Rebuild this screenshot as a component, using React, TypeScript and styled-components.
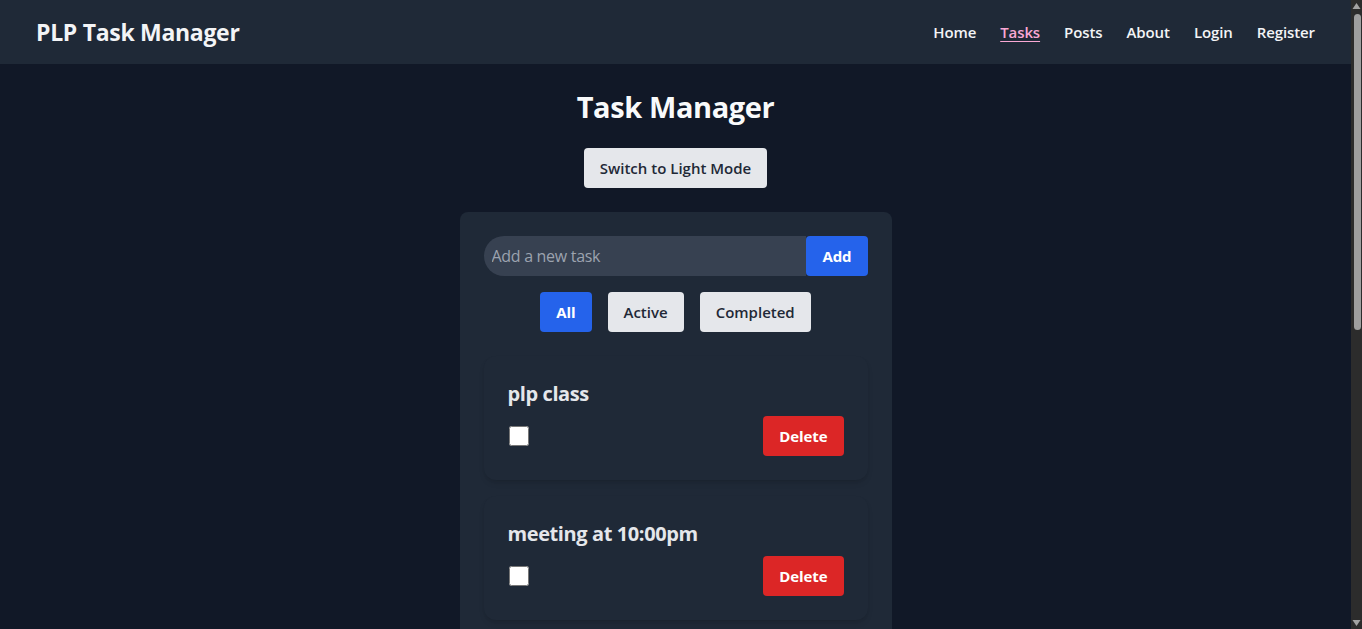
import React, { useState } from 'react';
import styled, { createGlobalStyle } from 'styled-components';

type Filter = 'all' | 'active' | 'completed';
type Variant = 'blue' | 'gray' | 'red';

type Task = {
    id: number
    text: string
    done: boolean
}

const GlobalStyle = createGlobalStyle`
    html {
        color-scheme: dark;
    }
    body {
        margin: 0;
        background-color: #111827;
        font-family: "Open Sans", "Noto Sans", sans-serif;
        color: #f3f4f6;
    }
    * {
        box-sizing: border-box;
    }
`

const Shell = styled.div`
    display: flex;
    height: 100vh;
    overflow: hidden;
    background-color: #111827;
`

const Page = styled.div`
    flex: 1;
    min-width: 0;
    overflow: hidden;
`

// window scrollbar, as the browser draws it in dark mode
const ScrollBar = styled.aside`
    width: 11px;
    flex-shrink: 0;
    display: flex;
    flex-direction: column;
    align-items: center;
    background-color: #2c2c2c;
`

const Arrow = styled.svg`
    display: block;
    width: 11px;
    height: 13px;
    flex-shrink: 0;
`

const Thumb = styled.div`
    width: 7px;
    height: 316px;
    margin: 1px 0 0 1px;
    border-radius: 4px;
    background-color: #9f9f9f;
`

const Spacer = styled.div`
    flex: 1;
`

const Header = styled.header`
    height: 64px;
    background-color: #1f2937;
    display: flex;
    align-items: center;
    justify-content: space-between;
    padding: 0 36px;
`

const Brand = styled.div`
    font-size: 23px;
    font-weight: 700;
    color: #f3f4f6;
    letter-spacing: -0.3px;
`

const Nav = styled.nav`
    display: flex;
    gap: 24px;
`

const NavLink = styled.a<{ $active?: boolean }>`
    font-size: 15px;
    font-weight: 600;
    letter-spacing: -0.1px;
    color: ${(props) => (props.$active ? '#f9a8d4' : '#f3f4f6')};
    text-decoration: ${(props) => (props.$active ? 'underline' : 'none')};
    text-underline-offset: 3px;
    cursor: pointer;
`

const Main = styled.main`
    display: flex;
    flex-direction: column;
    align-items: center;
    padding-top: 24px;
`

const Title = styled.h1`
    margin: 0 0 22px;
    font-size: 29px;
    line-height: 38px;
    font-weight: 700;
    letter-spacing: -0.4px;
    color: #f9fafb;
`

const ModeButton = styled.button`
    height: 40px;
    padding: 0 16px;
    border: none;
    border-radius: 4px;
    background-color: #e5e7eb;
    color: #1f2937;
    font-family: inherit;
    font-size: 15px;
    font-weight: 600;
    margin-bottom: 24px;
`

const Card = styled.section`
    width: 432px;
    background-color: #1f2937;
    border-radius: 8px;
    padding: 24px;
`

const AddRow = styled.form`
    display: flex;
    margin-bottom: 16px;
`

const Input = styled.input`
    flex: 1;
    height: 40px;
    border: none;
    outline: none;
    border-radius: 20px 0 0 20px;
    background-color: #374151;
    color: #f3f4f6;
    padding: 0 8px;
    font-family: inherit;
    font-size: 16px;
    letter-spacing: -0.3px;

    &::placeholder {
        color: #9ca3af;
    }
`

const Button = styled.button<{ $variant: Variant }>`
    height: 40px;
    padding: 0 16px;
    border: none;
    border-radius: 4px;
    font-family: inherit;
    font-size: 15px;
    font-weight: ${(props) => (props.$variant === 'gray' ? 600 : 700)};
    letter-spacing: ${(props) => (props.$variant === 'gray' ? '0' : '-0.1px')};
    cursor: pointer;
    background-color: ${(props) =>
        props.$variant === 'blue' ? '#2563eb' : props.$variant === 'red' ? '#dc2626' : '#e5e7eb'};
    color: ${(props) => (props.$variant === 'gray' ? '#1f2937' : '#ffffff')};
`

const Filters = styled.div`
    display: flex;
    justify-content: center;
    gap: 16px;
    margin-bottom: 24px;
`

const TaskList = styled.ul`
    list-style: none;
    margin: 0;
    padding: 0;
    display: flex;
    flex-direction: column;
    gap: 16px;
`

const TaskItem = styled.li`
    background-color: #1f2937;
    border-radius: 12px;
    padding: 24px;
    box-shadow: 0 4px 6px -1px rgba(0, 0, 0, 0.1), 0 2px 4px -2px rgba(0, 0, 0, 0.1);
`

const TaskText = styled.div<{ $done: boolean }>`
    font-size: 20px;
    line-height: 28px;
    font-weight: 700;
    letter-spacing: -0.4px;
    color: #e5e7eb;
    margin-bottom: 8px;
    text-decoration: ${(props) => (props.$done ? 'line-through' : 'none')};
`

const TaskRow = styled.div`
    display: flex;
    align-items: center;
    justify-content: space-between;
`

const Check = styled.input`
    width: 20px;
    height: 20px;
    margin: 0 0 0 1px;
    accent-color: #2563eb;
    color-scheme: light;
`

const initialTasks: Task[] = [
    { id: 1, text: 'plp class', done: false },
    { id: 2, text: 'meeting at 10:00pm', done: false },
]

export default function App() {
    const [tasks, setTasks] = useState<Task[]>(initialTasks)
    const [filter, setFilter] = useState<Filter>('all')
    const [draft, setDraft] = useState('')

    const visible = tasks.filter((t) =>
        filter === 'all' ? true : filter === 'active' ? !t.done : t.done
    )

    const addTask = (e: React.FormEvent) => {
        e.preventDefault()
        if (!draft.trim()) return
        setTasks([...tasks, { id: Date.now(), text: draft.trim(), done: false }])
        setDraft('')
    }

    return (
        <Shell>
            <GlobalStyle />
            <Page>
                <Header>
                    <Brand>PLP Task Manager</Brand>
                    <Nav>
                        <NavLink>Home</NavLink>
                        <NavLink $active>Tasks</NavLink>
                        <NavLink>Posts</NavLink>
                        <NavLink>About</NavLink>
                        <NavLink>Login</NavLink>
                        <NavLink>Register</NavLink>
                    </Nav>
                </Header>
                <Main>
                    <Title>Task Manager</Title>
                    <ModeButton>Switch to Light Mode</ModeButton>
                    <Card>
                        <AddRow onSubmit={addTask}>
                            <Input
                                placeholder="Add a new task"
                                value={draft}
                                onChange={(e) => setDraft(e.target.value)}
                            />
                            <Button $variant="blue" type="submit">Add</Button>
                        </AddRow>
                        <Filters>
                            <Button $variant={filter === 'all' ? 'blue' : 'gray'} onClick={() => setFilter('all')}>All</Button>
                            <Button $variant={filter === 'active' ? 'blue' : 'gray'} onClick={() => setFilter('active')}>Active</Button>
                            <Button $variant={filter === 'completed' ? 'blue' : 'gray'} onClick={() => setFilter('completed')}>Completed</Button>
                        </Filters>
                        <TaskList>
                            {visible.map((t) => (
                                <TaskItem key={t.id}>
                                    <TaskText $done={t.done}>{t.text}</TaskText>
                                    <TaskRow>
                                        <Check
                                            type="checkbox"
                                            checked={t.done}
                                            onChange={() =>
                                                setTasks(tasks.map((x) => (x.id === t.id ? { ...x, done: !x.done } : x)))
                                            }
                                        />
                                        <Button $variant="red" onClick={() => setTasks(tasks.filter((x) => x.id !== t.id))}>
                                            Delete
                                        </Button>
                                    </TaskRow>
                                </TaskItem>
                            ))}
                        </TaskList>
                    </Card>
                </Main>
            </Page>
            <ScrollBar>
                <Arrow viewBox="0 0 11 13">
                    <path d="M5.5 3 L9.5 9 L1.5 9 Z" fill="#a3a3a3" />
                </Arrow>
                <Thumb />
                <Spacer />
                <Arrow viewBox="0 0 11 13">
                    <path d="M5.5 10 L9.5 4 L1.5 4 Z" fill="#a3a3a3" />
                </Arrow>
            </ScrollBar>
        </Shell>
    )
}
